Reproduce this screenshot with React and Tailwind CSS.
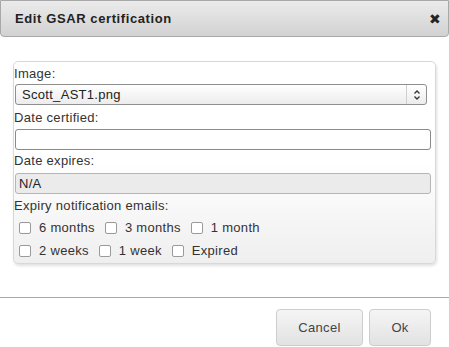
import React from "react";

function Box({ label }) {
  return (
    <label className="flex items-center mr-[5px]">
      <span className="inline-block w-[12px] h-[12px] border border-[#9a9a9a] rounded-[2px] bg-white ml-[5px] mr-[8px]" />
      <span>{label}</span>
    </label>
  );
}

export default function App() {
  return (
    <div className="w-[449px] h-[347px] bg-white text-[13px] text-[#333] tracking-[0.3px] relative overflow-hidden" style={{ fontFamily: '"Liberation Sans", Arial, sans-serif' }}>
      {/* header */}
      <div className="h-[37px] border border-[#a8a8a8] rounded-b-[4px] bg-gradient-to-b from-[#ebebeb] to-[#d2d2d2] flex items-center justify-between pl-[14px] pr-[7px]">
        <span className="font-bold text-[13px] text-[#222] tracking-[0.6px]">Edit GSAR certification</span>
        <span className="text-[14px] text-[#222] leading-none">✖</span>
      </div>

      {/* panel */}
      <div className="ml-[13px] mt-[24px] w-[423px] h-[203px] border border-[#d8d8d8] rounded-[5px] bg-gradient-to-b from-white via-white to-[#efefef] shadow-[1px_2px_3px_rgba(0,0,0,0.12)] pt-[3px]">
        <div className="leading-[18px] text-[#333]">Image:</div>
        <div className="mt-[1px] ml-[1px] w-[412px] h-[21px] border border-[#8f8f8f] rounded-[3px] bg-gradient-to-b from-white to-[#ececec] flex items-center">
          <span className="flex-1 pl-[6px] text-[#222]">Scott_AST1.png</span>
          <span className="w-[20px] h-full border-l border-[#cfcfcf] flex items-center justify-center">
            <svg width="8" height="12" viewBox="0 0 8 12" fill="none" stroke="#333" strokeWidth="1.3">
              <path d="M1.5 4.5 L4 2 L6.5 4.5" />
              <path d="M1.5 7.5 L4 10 L6.5 7.5" />
            </svg>
          </span>
        </div>
        <div className="leading-[18px] mt-[4px]">Date certified:</div>
        <div className="mt-[2px] ml-[1px] w-[416px] h-[21px] border border-[#8a8a8a] rounded-[3px] bg-white" />
        <div className="leading-[18px] mt-[2px]">Date expires:</div>
        <div className="mt-[3px] ml-[1px] w-[416px] h-[21px] border border-[#b5b5b5] rounded-[3px] bg-[#ebebeb] flex items-center pl-[3px] text-[#222]">N/A</div>
        <div className="leading-[18px] mt-[3px]">Expiry notification emails:</div>
        <div className="flex items-center h-[23px] mt-[1px]">
          <Box label="6 months" />
          <Box label="3 months" />
          <Box label="1 month" />
        </div>
        <div className="flex items-center h-[23px]">
          <Box label="2 weeks" />
          <Box label="1 week" />
          <Box label="Expired" />
        </div>
      </div>

      {/* footer */}
      <div className="mt-[33px] border-t border-[#a8a8a8] flex justify-end gap-[6px] pr-[18px] pt-[11px]">
        <button className="w-[87px] h-[37px] border border-[#cdcdcd] rounded-[4px] bg-gradient-to-b from-[#f5f5f5] to-[#e2e2e2] text-[#444] text-[13px]">Cancel</button>
        <button className="w-[62px] h-[37px] border border-[#cdcdcd] rounded-[4px] bg-gradient-to-b from-[#f5f5f5] to-[#e2e2e2] text-[#444] text-[13px]">Ok</button>
      </div>
    </div>
  );
}
